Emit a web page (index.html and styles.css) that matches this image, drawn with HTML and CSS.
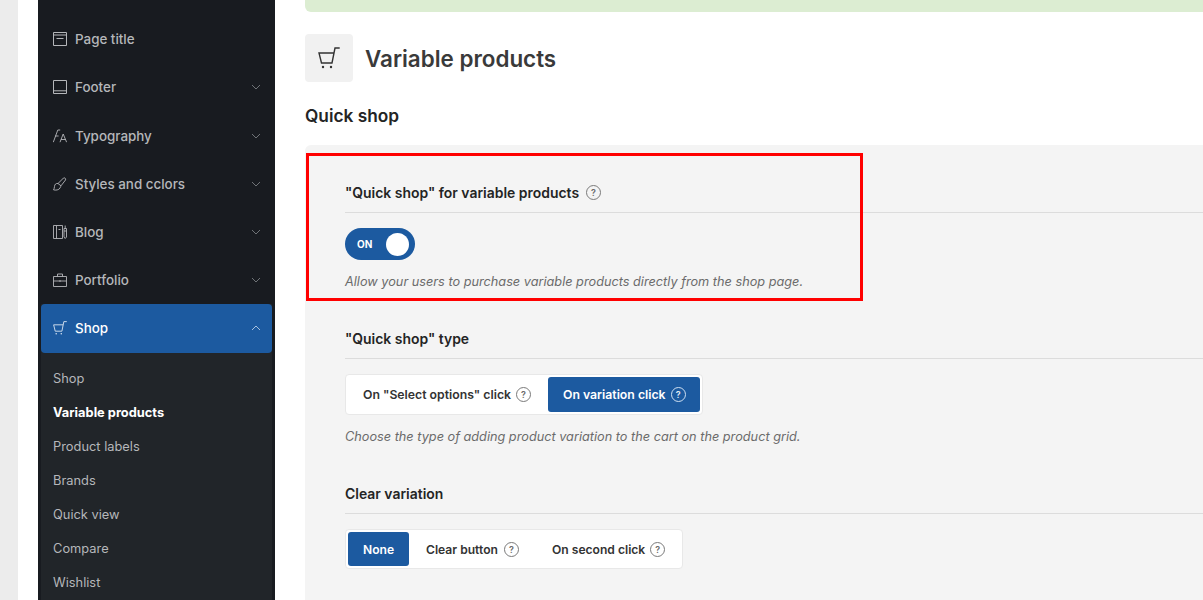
FILE: index.html
```html
<!DOCTYPE html>
<html lang="en">
<head>
<meta charset="utf-8">
<title>Variable products</title>
<link rel="stylesheet" href="styles.css">
</head>
<body>
<svg class="defs" width="0" height="0" aria-hidden="true">
  <symbol id="cart" viewBox="0 0 22 22"><path d="M21.700 1H17L14 16H3.500L1 6H16" fill="none" stroke="currentColor" stroke-width="1.400"/><circle cx="5" cy="20" r="1.200" fill="currentColor"/><circle cx="13" cy="20" r="1.200" fill="currentColor"/></symbol>
  <symbol id="chev" viewBox="0 0 10 6"><path d="M1 1l4 4 4-4" fill="none" stroke="currentColor" stroke-width="1"/></symbol>
</svg>
<div class="strip"></div>
<nav class="sidebar">
  <a class="row"><svg class="ico" viewBox="0 0 14 14"><path d="M.5.5h13v13H.5zM.5 3h13M3.500 6.500h7" fill="none" stroke="currentColor"/></svg><span>Page title</span></a>
  <a class="row"><svg class="ico" viewBox="0 0 14 14"><path d="M.5.5h13v13H.5zM.5 10.800h13" fill="none" stroke="currentColor"/></svg><span>Footer</span><svg class="chev"><use href="#chev"/></svg></a>
  <a class="row"><svg class="ico" viewBox="0 0 14 14"><path d="M.3 13.200L4.800 1h2.400M2 7h3.600M7 13.200L10.200 5l3.400 8.200M8 10.500h4.600" fill="none" stroke="currentColor" stroke-width=".9"/></svg><span>Typography</span><svg class="chev"><use href="#chev"/></svg></a>
  <a class="row"><svg class="ico" viewBox="0 0 14 14"><path d="M5 6.500L10.500 1c1-.8 2.800.8 2 2L8 8.800M5 6.500C3 6 1.600 7.500 1.500 9.500 1.400 11 1 12 .5 12.800c2 .7 5.500.3 6.500-1.800C7.600 9.800 8 9 8 8.800L5 6.500z" fill="none" stroke="currentColor" stroke-width=".9"/></svg><span>Styles and cclors</span><svg class="chev"><use href="#chev"/></svg></a>
  <a class="row"><svg class="ico" viewBox="0 0 14 14"><path d="M.5.5h9v13h-9zM3.500.5v13M5.500 4.500h2M11 3.500h2.500v8.500L12.200 13.500 11 12zM12.200.5v3M11 6h2.500" fill="none" stroke="currentColor" stroke-width=".9"/></svg><span>Blog</span><svg class="chev"><use href="#chev"/></svg></a>
  <a class="row"><svg class="ico" viewBox="0 0 14 14"><path d="M.5 3.500h13v10H.5zM4.500 3.500V1h5v2.500M.5 8h13M7 7v2" fill="none" stroke="currentColor" stroke-width=".9"/></svg><span>Portfolio</span><svg class="chev"><use href="#chev"/></svg></a>
  <div class="group">
    <a class="row active"><svg class="ico"><use href="#cart"/></svg><span>Shop</span><svg class="chev up"><use href="#chev"/></svg></a>
    <ul class="sub">
      <li>Shop</li>
      <li class="current">Variable products</li>
      <li>Product labels</li>
      <li>Brands</li>
      <li>Quick view</li>
      <li>Compare</li>
      <li>Wishlist</li>
    </ul>
  </div>
</nav>
<main class="main">
  <div class="notice"></div>
  <header class="head">
    <div class="head-icon"><svg class="head-cart"><use href="#cart"/></svg></div>
    <h1>Variable products</h1>
  </header>
  <h2>Quick shop</h2>
  <section class="panel">
    <div class="field first">
      <h3>"Quick shop" for variable products <span class="help">?</span></h3>
      <div class="toggle"><span>ON</span><i></i></div>
      <p>Allow your users to purchase variable products directly from the shop page.</p>
    </div>
    <div class="field second">
      <h3>"Quick shop" type</h3>
      <div class="seg">
        <button class="opt">On "Select options" click <span class="help">?</span></button>
        <button class="on">On variation click <span class="help">?</span></button>
      </div>
      <p>Choose the type of adding product variation to the cart on the product grid.</p>
    </div>
    <div class="field third">
      <h3>Clear variation</h3>
      <div class="seg short">
        <button class="on none">None</button>
        <button class="mid">Clear button <span class="help">?</span></button>
        <button class="last">On second click <span class="help">?</span></button>
      </div>
    </div>
  </section>
  <div class="redbox"></div>
</main>
</body>
</html>
```

FILE: styles.css
```css
* { box-sizing: border-box; }
html, body { margin: 0; height: 600px; overflow: hidden; }
body {
  display: flex;
  background: #fff;
  font-family: Inter, "Liberation Sans", sans-serif;
  color: #242424;
}
.defs { position: absolute; }
.strip { width: 18px; background: #ececec; flex: none; margin-right: 20px; }

.sidebar {
  width: 237px;
  flex: none;
  background: #181b20;
  padding-top: 15.2px;
  color: #b5b7ba;
  overflow: hidden;
}
.row {
  display: flex;
  align-items: center;
  height: 48.2px;
  padding: 0 14px 0 15px;
  font-size: 13.4px;
  font-weight: 500;
  gap: 8px;
}
.ico { width: 14px; height: 14px; flex: none; color: #b5b7ba; }
.chev { width: 10px; height: 6px; margin-left: auto; color: #6f7377; }
.group { margin: 0 3px; background: #212529; }
.row.active {
  background: #1c5aa0;
  color: #fff;
  border-radius: 4px;
  height: 49px;
  padding: 0 11px 1px 12px;
}
.row.active .ico { color: #dbe6f2; }
.row.active .chev { color: #a7c0dd; }
.chev.up { transform: rotate(180deg); }
.sub { list-style: none; margin: 0; padding: 9px 0 0 12px; font-size: 12.85px; font-weight: 400; }
.sub li { height: 34px; line-height: 34px; }
.sub .current { color: #fff; font-weight: 700; }

.main {
  position: relative;
  flex: 1;
  min-width: 0;
  margin-left: 30px;
}
.notice { height: 12px; background: #dcedd2; border-radius: 0 0 0 6px; }
.head { display: flex; align-items: center; gap: 12px; margin-top: 22px; height: 48px; }
.head-icon {
  width: 48px; height: 48px;
  background: #f1f1f1;
  border-radius: 4px;
  display: flex; align-items: center; justify-content: center;
}
.head-cart { width: 22px; height: 22px; color: #333; }
h1 { margin: 0; font-size: 22.4px; font-weight: 600; color: #3a3a3a; }
h2 { margin: 22px 0 17px; font-size: 17.3px; line-height: 24px; font-weight: 600; color: #242424; }
.panel { background: #f4f4f4; border-radius: 6px 0 0 0; padding: 0 0 0 40px; height: 460px; }
.field h3 {
  margin: 0 0 15px;
  padding-bottom: 10px;
  height: 30px;
  font-size: 13.95px;
  line-height: 20px;
  font-weight: 600;
  color: #242424;
  border-bottom: 1px solid #dcdcdc;
  display: flex;
  align-items: center;
  gap: 7px;
}
.field.first { padding-top: 38px; }
.field.second { padding-top: 39px; }
.field.third { padding-top: 39px; }
.field p {
  margin: 14px 0 0;
  font-size: 12.72px;
  line-height: 16px;
  font-style: italic;
  color: #6b6b6b;
}
.help {
  width: 15px; height: 15px;
  flex: none;
  border: 1px solid #7a7a7a;
  border-radius: 50%;
  color: #6a6a6a;
  font-size: 9px;
  font-weight: 600;
  line-height: 13px;
  text-align: center;
}
.toggle {
  width: 70px; height: 32px;
  background: #1c5aa0;
  border-radius: 16px;
  display: flex; align-items: center; justify-content: space-between;
  padding: 0 6px 0 12px;
  color: #fff;
  font-size: 10px;
  font-weight: 700;
}
.toggle i { width: 23px; height: 23px; border-radius: 50%; background: #fff; }
.seg {
  display: flex;
  width: fit-content;
  background: #fff;
  border: 1px solid #e8e8e8;
  border-radius: 4px;
  padding: 2px;
}
.seg button {
  height: 35px;
  border: 0;
  background: transparent;
  font: 600 12.25px Inter, "Liberation Sans", sans-serif;
  color: #333;
  border-radius: 3px;
  display: flex; align-items: center; gap: 5px;
  padding: 0 15px;
}
.seg button.on { padding: 0 14px 0 15px; }
.seg.short button { height: 34px; font-size: 12.1px; }
.seg .opt { width: 200px; white-space: nowrap; }
.seg button.on { background: #1c5aa0; color: #fff; }
.seg button.on .help { color: #e3ecf6; border-color: #cfe0f2; }
.seg button.none { padding: 0 15px; width: 61px; justify-content: center; }
.seg button.mid { padding: 0 17px; width: 126px; gap: 6px; white-space: nowrap; }
.seg button.last { padding: 0 15px 0 17px; white-space: nowrap; }
.redbox {
  position: absolute;
  left: 1px; top: 153px;
  width: 557px; height: 148px;
  border: 3px solid #f00;
}
```
